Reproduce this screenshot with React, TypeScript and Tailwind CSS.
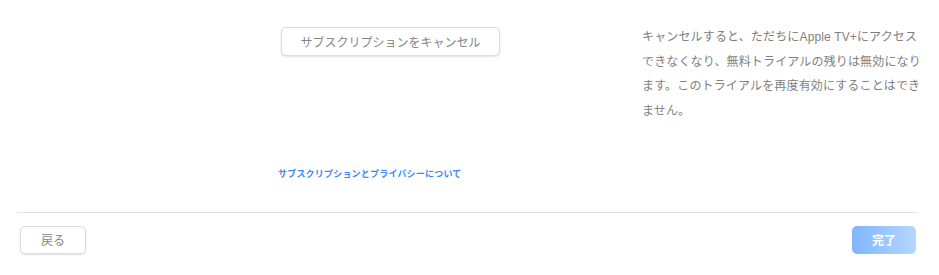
import React from "react";

export default function App() {
  return (
    <div className="w-[939px] h-[275px] bg-white overflow-hidden" style={{ fontFamily: '"Noto Sans CJK JP", "Noto Sans", sans-serif' }}>
      <div className="flex h-[212px]">
        <div className="w-[642px] shrink-0 pl-[278px] flex flex-col">
          <button className="ml-[3px] mt-[27px] w-[219px] h-[29px] rounded-[5px] border border-[#dcdcdc] bg-white shadow-[0_1px_2px_rgba(0,0,0,0.12)] text-[12px] text-[#858585] flex items-center justify-center">
            サブスクリプションをキャンセル
          </button>
          <a className="mt-[112px] text-[9px] leading-[12px] font-semibold text-[#3b89f6] tracking-[0.2px]">
            サブスクリプションとプライバシーについて
          </a>
        </div>
        <div className="pt-[25px] text-[12px] leading-[24.5px] tracking-[0.15px] text-[#808080]" style={{ fontFamily: '"Liberation Sans", "Noto Sans CJK JP", sans-serif' }}>
          <div>キャンセルすると、ただちにApple TV+にアクセス</div>
          <div>できなくなり、無料トライアルの残りは無効になり</div>
          <div>ます。このトライアルを再度有効にすることはでき</div>
          <div>ません。</div>
        </div>
      </div>
      <div className="ml-[17px] w-[900px] border-t border-[#e3e3e3]" />
      <div className="flex justify-between items-start pl-[20px] pr-[23px] pt-[13px]">
        <button className="w-[66px] h-[28px] rounded-[5px] border border-[#dcdcdc] bg-white shadow-[0_1px_2px_rgba(0,0,0,0.12)] text-[12px] text-[#858585] flex items-center justify-center">
          戻る
        </button>
        <button className="w-[64px] h-[28px] rounded-[5px] bg-gradient-to-r from-[#80b6ff] to-[#b5d6ff] text-[12px] font-bold text-white flex items-center justify-center">
          完了
        </button>
      </div>
    </div>
  );
}
